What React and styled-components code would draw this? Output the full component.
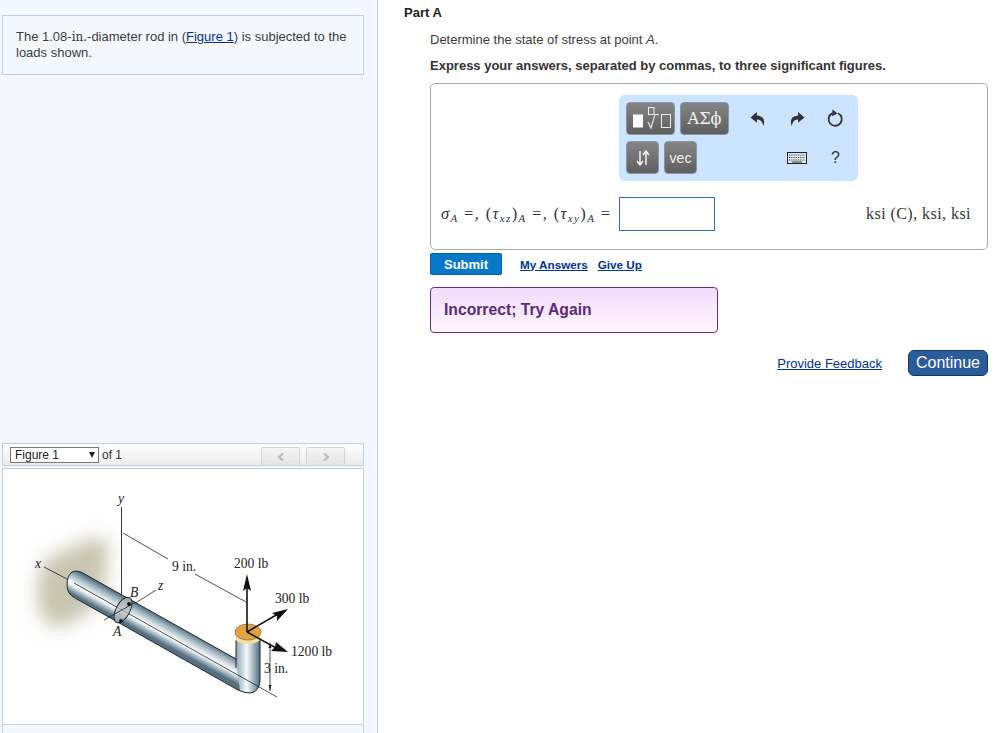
import styled, { createGlobalStyle } from "styled-components";

const GlobalStyle = createGlobalStyle`
  html, body {
    margin: 0;
    padding: 0;
    height: 100%;
    overflow: hidden;
    background: #fff;
    font-family: "Liberation Sans", Arial, sans-serif;
    color: #333;
  }
  * { box-sizing: border-box; }
`;

const Page = styled.div`
  display: flex;
  width: 1001px;
  height: 733px;
  overflow: hidden;
`;

const Sidebar = styled.aside`
  flex: 0 0 377px;
  height: 733px;
  padding: 15px 13px 0 2px;
  background: #f4f8fe;
  border-right: 1px solid #c5d0de;
`;

const IntroBox = styled.div`
  height: 60px;
  padding: 13px 13px 0;
  font-size: 13px;
  line-height: 16px;
  color: #3c3c3c;
  border: 1px solid #bdcfe2;
`;

const SerifUnit = styled.span`
  font-family: "DejaVu Serif", serif;
  font-size: 12px;
  color: #333;
`;

const TextLink = styled.a`
  color: #003399;
  text-decoration: underline;
`;

const FigureBar = styled.div`
  display: flex;
  align-items: flex-start;
  height: 23px;
  margin-top: 368px;
  padding: 3px 18px 0 7px;
  font-size: 12px;
  color: #333;
  background: linear-gradient(#fdfdfd, #ececec);
  border: 1px solid #bdd2e6;
`;

const FigureSelect = styled.div`
  display: flex;
  align-items: center;
  justify-content: space-between;
  width: 89px;
  height: 16px;
  padding: 0 3px 0 4px;
  margin-right: 3px;
  color: #222;
  background: #fff;
  border: 1px solid #777;
`;

const SelectArrow = styled.span`
  width: 0;
  height: 0;
  border-left: 3px solid transparent;
  border-right: 3px solid transparent;
  border-top: 6px solid #222;
`;

const OfCount = styled.span`
  line-height: 16px;
  margin-right: auto;
`;

const PagerButton = styled.div`
  display: flex;
  align-items: center;
  justify-content: center;
  width: 39px;
  height: 19px;
  margin-left: 6px;
  background: linear-gradient(#f5f5f5, #e4e4e4);
  border: 1px solid #d6d6d6;
  border-radius: 2px;
`;

const FigureBox = styled.div`
  height: 257px;
  margin-top: 2px;
  background: #fff;
  border: 1px solid #bdd2e6;
`;

const FigureSvg = styled.svg`
  display: block;
  width: 360px;
  height: 255px;
`;

const FigureFooter = styled.div`
  height: 40px;
  background: #f4f8fe;
  border: 1px solid #bdd2e6;
  border-top-width: 0;
`;

const Main = styled.main`
  flex: 1;
  padding: 5px 13px 0 27px;
`;

const PartTitle = styled.h2`
  margin: 0 0 0 -1px;
  font-size: 13px;
  line-height: 15px;
  font-weight: 700;
  color: #222;
`;

const Indented = styled.div`
  margin-left: 25px;
`;

const Prompt = styled.p`
  margin: 12px 0 0;
  font-size: 13px;
  line-height: 15px;
  color: #3c3c3c;
`;

const Instruction = styled.p`
  margin: 11px 0 0;
  font-size: 13px;
  line-height: 15px;
  font-weight: 700;
  color: #333;
`;

const AnswerBox = styled.div`
  height: 167px;
  margin-top: 10px;
  padding: 11px 16px 0 10px;
  border: 1px solid #aaa;
  border-radius: 5px;
`;

const EditorPanel = styled.div`
  display: flex;
  flex-direction: column;
  gap: 6px;
  width: 239px;
  height: 86px;
  margin-left: 178px;
  padding: 7px 3px 7px 7px;
  background: #cce4ff;
  border-radius: 6px;
`;

const ToolRow = styled.div`
  display: flex;
  gap: 5px;
  height: 33px;
`;

const ToolButton = styled.div`
  display: flex;
  align-items: center;
  justify-content: center;
  width: ${(p) => p.$width || 33}px;
  color: #f2f2f2;
  font-family: ${(p) => (p.$serif ? '"DejaVu Serif", serif' : '"Liberation Sans", sans-serif')};
  font-size: ${(p) => p.$size || 14}px;
  background: linear-gradient(#858585, #5f5f5f);
  border: 1px solid #8795a5;
  border-radius: 4px;
`;

const IconGroup = styled.div`
  display: flex;
  justify-content: flex-end;
  width: 117px;
  margin-left: auto;
`;

const ToolIcon = styled.div`
  display: flex;
  align-items: center;
  justify-content: center;
  width: 39px;
  font-size: 16px;
  color: #333;
`;

const EquationRow = styled.div`
  display: flex;
  align-items: center;
  height: 34px;
  margin-top: 16px;
`;

const MathText = styled.span`
  font-family: "Liberation Serif", serif;
  font-size: 16.5px;
  letter-spacing: 1.35px;
  color: #333;
  white-space: pre;
`;

const MathVar = styled.i`
  font-family: "Liberation Serif", serif;
`;

const MathSub = styled.sub`
  font-size: 11px;
  font-style: italic;
  line-height: 0;
  vertical-align: -3px;
`;

const AnswerInput = styled.div`
  width: 96px;
  height: 34px;
  margin-left: 8px;
  background: #fff;
  border: 1px solid #2f6fc4;
`;

const Units = styled.span`
  margin-left: auto;
  font-family: "Liberation Serif", serif;
  font-size: 16px;
  letter-spacing: 0.45px;
  color: #333;
`;

const ActionRow = styled.div`
  display: flex;
  align-items: center;
  margin-top: 3px;
  font-size: 11.7px;
  font-weight: 700;
`;

const SubmitButton = styled.div`
  display: flex;
  align-items: center;
  justify-content: center;
  width: 72px;
  height: 22px;
  margin-right: 18px;
  font-size: 13px;
  color: #fff;
  background: #0a78c8;
  border: 1px solid #0a5f9e;
  border-radius: 2px;
`;

const ActionLink = styled(TextLink)`
  margin-right: 10px;
`;

const Feedback = styled.div`
  display: flex;
  align-items: center;
  width: 288px;
  height: 46px;
  margin-top: 12px;
  padding-left: 13px;
  font-size: 15.7px;
  font-weight: 700;
  color: #5a2a7a;
  background: linear-gradient(#f3dcfb, #fdf5ff);
  border: 1px solid #6a2c8c;
  border-radius: 4px;
`;

const FooterRow = styled.div`
  display: flex;
  align-items: center;
  justify-content: flex-end;
  margin-top: 17px;
`;

const FeedbackLink = styled(TextLink)`
  margin-right: 26px;
  font-size: 13px;
  padding-top: 1px;
`;

const ContinueButton = styled.div`
  display: flex;
  align-items: center;
  justify-content: center;
  width: 80px;
  height: 26px;
  font-size: 16px;
  color: #fff;
  background: #2a5b9b;
  border: 1px solid #12356b;
  border-radius: 6px;
`;

const FigText = styled.text`
  font-family: "Liberation Serif", serif;
  font-size: ${(p) => p.$size || 13.6}px;
  font-style: ${(p) => (p.$italic ? "italic" : "normal")};
  fill: #222;
`;

function RodFigure() {
  return (
    <FigureSvg viewBox="3 469 360 255">
      <defs>
        <filter id="blur" x="-40%" y="-40%" width="180%" height="180%">
          <feGaussianBlur stdDeviation="9" />
        </filter>
        <linearGradient id="rodShade" gradientUnits="userSpaceOnUse" x1="77" y1="571" x2="66.2" y2="590.8">
          <stop offset="0" stopColor="#566f7e" />
          <stop offset="0.22" stopColor="#9cb0bc" />
          <stop offset="0.48" stopColor="#e3eaee" />
          <stop offset="0.62" stopColor="#ffffff" />
          <stop offset="0.85" stopColor="#94a9b6" />
          <stop offset="1" stopColor="#56707f" />
        </linearGradient>
        <linearGradient id="riserShade" gradientUnits="userSpaceOnUse" x1="236" y1="0" x2="260" y2="0">
          <stop offset="0" stopColor="#8fa5b2" />
          <stop offset="0.45" stopColor="#f6f9fa" />
          <stop offset="0.8" stopColor="#8aa0ae" />
          <stop offset="1" stopColor="#4f6a7a" />
        </linearGradient>
      </defs>

      {/* wall shadow */}
      <path d="M44 560 L92 538 L108 540 L106 580 L92 610 L60 628 L42 620 L36 590Z" fill="#c8c5b0" filter="url(#blur)" />

      {/* axes behind rod */}
      <line x1="44" y1="567" x2="67" y2="579" stroke="#222" strokeWidth="0.8" />
      <line x1="121.5" y1="507" x2="121.5" y2="600" stroke="#222" strokeWidth="0.9" />
      <line x1="123" y1="533" x2="168" y2="559" stroke="#222" strokeWidth="0.8" />
      <line x1="195" y1="574" x2="246" y2="602" stroke="#222" strokeWidth="0.8" />
      <line x1="134" y1="604" x2="156" y2="590" stroke="#222" strokeWidth="0.8" />

      {/* rod */}
      <path
        d="M72 572 Q76 570 81 572 L236 659 L236 638 L260 638 L260 681 Q259 692 250 693 Q244 693 238 690 L75 598 Q67 594 67 585 Q67 576 72 572Z"
        fill="url(#rodShade)"
      />
      <path d="M236 640 H260 V681 Q259 692 250 693 Q244 693 240 691 L236 659Z" fill="url(#riserShade)" />
      <path
        d="M236 659 L81 572 Q76 570 72 572 Q67 576 67 585 Q67 594 75 598 L238 690 Q244 693 250 693 Q259 692 260 681 V640"
        fill="none"
        stroke="#1c2a33"
        strokeWidth="1"
      />
      <line x1="236" y1="640" x2="236" y2="668" stroke="#1c2a33" strokeWidth="1" />
      <line x1="74" y1="583" x2="277" y2="697" stroke="#222" strokeWidth="0.8" />

      {/* section at A and B */}
      <ellipse cx="123" cy="610" rx="7" ry="14" transform="rotate(28 123 610)" fill="#b6bcc0" fillOpacity="0.75" stroke="#222" strokeWidth="0.9" />
      <line x1="104" y1="620" x2="136" y2="602" stroke="#222" strokeWidth="0.8" />
      <circle cx="129" cy="604" r="1.9" fill="#111" />
      <circle cx="121" cy="621" r="1.9" fill="#111" />

      {/* cap */}
      <path d="M235.5 632 V640 Q240 644 248 644 Q256 644 260 640 V632Z" fill="#f6dda0" />
      <ellipse cx="248" cy="632" rx="13" ry="8" fill="#e2a440" stroke="#6b5a30" strokeWidth="0.6" />

      {/* loads */}
      <line x1="247" y1="632" x2="247" y2="584" stroke="#111" strokeWidth="1.6" />
      <path d="M247 574 L251 591 L247 588 L243 591Z" fill="#111" />
      <line x1="247" y1="632" x2="278" y2="614" stroke="#111" strokeWidth="1.6" />
      <path d="M288 609 L277 621 L277 616 L272 613Z" fill="#111" />
      <line x1="247" y1="632" x2="278" y2="649" stroke="#111" strokeWidth="1.6" />
      <path d="M288 652 L271 651 L275 647 L276 642Z" fill="#111" />

      {/* 3 in. dimension */}
      <line x1="270" y1="645" x2="270" y2="691" stroke="#222" strokeWidth="0.8" />
      <path d="M270 642 L268.5 648 H271.5Z M270 691 L268.5 685 H271.5Z" fill="#222" />

      <FigText x="118" y="503" $italic>y</FigText>
      <FigText x="35" y="568" $italic>x</FigText>
      <FigText x="172" y="571">9 in.</FigText>
      <FigText x="234" y="568">200 lb</FigText>
      <FigText x="275" y="603">300 lb</FigText>
      <FigText x="291" y="656">1200 lb</FigText>
      <FigText x="264" y="673">3 in.</FigText>
      <FigText x="158" y="590" $italic>z</FigText>
      <FigText x="130" y="597" $italic>B</FigText>
      <FigText x="113" y="636" $italic>A</FigText>
    </FigureSvg>
  );
}

function Chevron({ flip }) {
  return (
    <svg width="8" height="10" viewBox="0 0 8 10">
      <path d={flip ? "M2 1.5 L6 5 L2 8.5" : "M6 1.5 L2 5 L6 8.5"} fill="none" stroke="#b5b5b5" strokeWidth="1.8" />
    </svg>
  );
}

function TemplatesIcon() {
  return (
    <svg width="45" height="28" viewBox="0 0 45 28">
      <rect x="5" y="9.5" width="10" height="13" fill="#fff" />
      <rect x="20.5" y="2.5" width="5.5" height="7" fill="none" stroke="#ececec" />
      <path d="M20 17 L23 23 L27 9.5 H31" fill="none" stroke="#ececec" strokeWidth="1.1" />
      <rect x="33.5" y="9.5" width="9" height="13" fill="none" stroke="#ececec" />
    </svg>
  );
}

function ArrowsIcon() {
  return (
    <svg width="14" height="16" viewBox="0 0 14 16">
      <path d="M4 1 V14 M1 11 L4 15 L7 11 M10 15 V2 M7 5 L10 1 L13 5" fill="none" stroke="#f2f2f2" strokeWidth="1.5" />
    </svg>
  );
}

function UndoIcon({ flip }) {
  return (
    <svg width="16" height="16" viewBox="0 0 15 15" style={flip ? { transform: "scaleX(-1)" } : undefined}>
      <path d="M6.5 1 L0.5 6 L6.5 11 V8 Q11 7.5 12.5 14 Q15.5 5 6.5 4.2Z" fill="#333" />
    </svg>
  );
}

function ResetIcon() {
  return (
    <svg width="17" height="19" viewBox="0 0 17 19">
      <path d="M11 4.2 A6.6 6.6 0 1 1 5 4.4" fill="none" stroke="#333" strokeWidth="1.8" />
      <path d="M5.5 0.5 L10.5 4.4 L5 7.2Z" fill="#333" />
    </svg>
  );
}

function KeyboardIcon() {
  return (
    <svg width="20" height="12" viewBox="0 0 20 12">
      <rect x="0.5" y="0.5" width="19" height="11" fill="#dfe8f0" stroke="#222" />
      <path d="M2 3 H18 M2 5.5 H18 M2 8 H18" stroke="#444" strokeWidth="1.2" strokeDasharray="1 0.8" />
      <path d="M5 10 H15" stroke="#333" />
    </svg>
  );
}

export default function App() {
  return (
    <Page>
      <GlobalStyle />
      <Sidebar>
        <IntroBox>
          The 1.08-<SerifUnit>in.</SerifUnit>-diameter rod in (<TextLink>Figure 1</TextLink>) is subjected to the loads shown.
        </IntroBox>
        <FigureBar>
          <FigureSelect>
            Figure 1
            <SelectArrow />
          </FigureSelect>
          <OfCount>of 1</OfCount>
          <PagerButton>
            <Chevron />
          </PagerButton>
          <PagerButton>
            <Chevron flip />
          </PagerButton>
        </FigureBar>
        <FigureBox>
          <RodFigure />
        </FigureBox>
        <FigureFooter />
      </Sidebar>

      <Main>
        <PartTitle>Part A</PartTitle>
        <Indented>
          <Prompt>
            Determine the state of stress at point <i>A</i>.
          </Prompt>
          <Instruction>Express your answers, separated by commas, to three significant figures.</Instruction>
          <AnswerBox>
            <EditorPanel>
              <ToolRow>
                <ToolButton $width={49}>
                  <TemplatesIcon />
                </ToolButton>
                <ToolButton $width={49} $serif $size={16}>
                  ΑΣϕ
                </ToolButton>
                <IconGroup>
                  <ToolIcon>
                    <UndoIcon />
                  </ToolIcon>
                  <ToolIcon>
                    <UndoIcon flip />
                  </ToolIcon>
                  <ToolIcon>
                    <ResetIcon />
                  </ToolIcon>
                </IconGroup>
              </ToolRow>
              <ToolRow>
                <ToolButton>
                  <ArrowsIcon />
                </ToolButton>
                <ToolButton>vec</ToolButton>
                <IconGroup>
                  <ToolIcon>
                    <KeyboardIcon />
                  </ToolIcon>
                  <ToolIcon>?</ToolIcon>
                </IconGroup>
              </ToolRow>
            </EditorPanel>
            <EquationRow>
              <MathText>
                <MathVar>σ</MathVar>
                <MathSub>A</MathSub> =, (<MathVar>τ</MathVar>
                <MathSub>xz</MathSub>)<MathSub>A</MathSub> =, (<MathVar>τ</MathVar>
                <MathSub>xy</MathSub>)<MathSub>A</MathSub> =
              </MathText>
              <AnswerInput />
              <Units>ksi (C), ksi, ksi</Units>
            </EquationRow>
          </AnswerBox>
          <ActionRow>
            <SubmitButton>Submit</SubmitButton>
            <ActionLink>My Answers</ActionLink>
            <ActionLink>Give Up</ActionLink>
          </ActionRow>
          <Feedback>Incorrect; Try Again</Feedback>
          <FooterRow>
            <FeedbackLink>Provide Feedback</FeedbackLink>
            <ContinueButton>Continue</ContinueButton>
          </FooterRow>
        </Indented>
      </Main>
    </Page>
  );
}
